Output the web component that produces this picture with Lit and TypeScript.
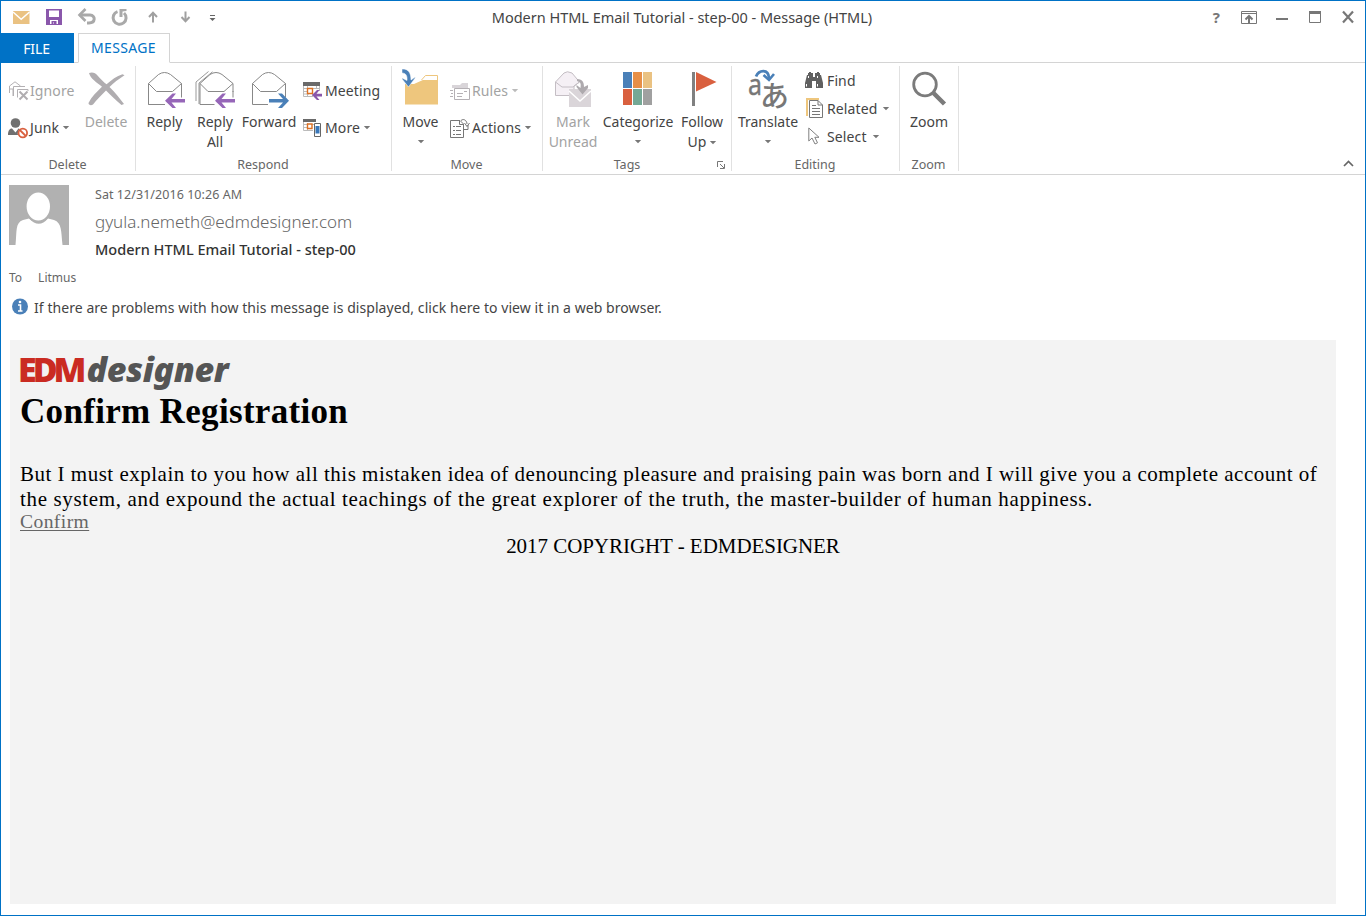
import { LitElement, html, svg, css } from "lit";
import { customElement } from "lit/decorators.js";

const ic = (w: number, h: number, body: unknown, dx = 0, dy = 0) =>
  html`<svg width=${w} height=${h} viewBox="${-dx} ${-dy} ${w} ${h}" fill="none">${body}</svg>`;

const arrowLeft = svg`<path d="M18 29.700L25.500 22.500H29L24.500 28H38V31.500H24.500L29 37H25.500Z" fill="#9666b8"/>`;

const icons = {
  mail: ic(17, 13, svg`<path d="M0 0H16.500V13H0Z" fill="#eac282"/><path d="M0 1L8.200 8.200L16.500 1" stroke="#fff" stroke-width="1.500"/>`),
  save: ic(16, 16, svg`<path d="M0 0H16V16H0Z" fill="#8a57ab"/><path d="M3 1.500H13V8H3Z" fill="#fff"/><path d="M4 11H12V15H4Z" fill="#fff"/><path d="M5.500 12H10.500V15H8V13H7.500V15H5.500Z" fill="#8a57ab"/>`),
  undo: ic(18, 16, svg`<path d="M1.500 6H12C18 6.500 17.500 14 11 14H9" stroke="#a9a9a9" stroke-width="3"/><path d="M7.500 0L1.500 6L7.500 12" stroke="#a9a9a9" stroke-width="2.600"/>`),
  redo: ic(18, 17, svg`<path d="M6.500 2.600A6.500 6.500 0 1 0 13 4" stroke="#a9a9a9" stroke-width="3"/><path d="M8.500 0H15.500V2L11.500 2.500V8H8.500Z" fill="#a9a9a9"/>`, -1),
  up: ic(10, 12, svg`<path d="M5 11.500V2M1 6L5 1.800L9 6" stroke="#a0a0a0" stroke-width="2"/>`),
  down: ic(10, 12, svg`<path d="M5 .500V10M1 6L5 10.200L9 6" stroke="#a0a0a0" stroke-width="2"/>`, 1.5),
  custom: ic(6, 6, svg`<path d="M.500 .500H5.500" stroke="#666"/><path d="M0 3H6L3 6Z" fill="#666"/>`, 2.5, 1),
  ribbon: ic(16, 13, svg`<path d="M.500 .500H15.500V12.500H.500ZM0 2.500H16" stroke="#777"/><path d="M8 12V6M4.500 8.500L8 5L11.500 8.500" stroke="#777" stroke-width="2"/>`),
  min: ic(12, 2, svg`<path d="M0 0H12V2H0Z" fill="#777"/>`, 0, 2),
  max: ic(12, 12, svg`<path d="M.500 .500H11.500V11.500H.500Z" stroke="#777"/><path d="M0 0H12V3H0Z" fill="#777"/>`),
  close: ic(12, 12, svg`<path d="M1 .500L11 11.500M11 .500L1 11.500" stroke="#777" stroke-width="2.200"/>`),
  caret: ic(6, 3, svg`<path d="M-.200 0H6.200L3 3.300Z" fill="currentColor"/>`),
  ignore: ic(20, 20, svg`<path d="M.500 12V5L6 .800L11.500 5M4 15V8H1M4.500 15V5.500H16M8.500 16.500V8.500H19V10" stroke="#b3b0b3"/><path d="M10.500 10.500L18.500 18.500M18.500 10.500L10.500 18.500" stroke="#b0adb0" stroke-width="2"/>`, 1),
  junk: ic(20, 21, svg`<circle cx="7.500" cy="5" r="4.800" fill="#707070"/><path d="M0 17C0 12 2 10.500 4 10.500L7.500 14.500L10.500 10.500C13 10.500 9 13 10 17Z" fill="#707070"/><circle cx="14.800" cy="15" r="4.300" fill="#fff" stroke="#d9603f" stroke-width="1.800"/><path d="M11.800 12L17.800 18" stroke="#d9603f" stroke-width="1.800"/>`),
  del: ic(38, 34, svg`<path d="M1.500 1C5-.500 8 1 10 3.500C13 7 16 10 19 12.200C24 8 29 4 35 2.200L37 3.200C31 7 26 11 22 15C28 21 32 26 36.500 32L34 33C29 29 24 24 18.500 18.500C14 23 9 28 5.500 32.500C3.500 34 1 33 1 31C4 25 9 20 14.500 14.800C9 10 3 7 1.500 1Z" fill="#b0adb0"/>`, 0.5, 1),
  reply: ic(38, 40, svg`<path d="M1.500 12.500L11.500 3.500Q17.500-.500 23.500 3.500L34.500 12.500V33.500H1.500Z" fill="#fff" stroke="#888"/><path d="M1.500 12.500L9.500 20.500H25.500L34.500 12.500" stroke="#888"/><path d="M16 21H38V40H16Z" fill="#fff"/><path d="M34.500 20V26.500M1.500 33.500H18" stroke="#888"/>${arrowLeft}`, 1),
  replyAll: ic(40, 40, svg`<path d="M.500 30V11L13 .500M3.500 33V12L17 .800" stroke="#999"/><path d="M4.500 12.500L14.500 3.500Q20.500-.500 26.500 3.500L37.500 12.500V33.500H4.500Z" fill="#fff" stroke="#888"/><path d="M4.500 12.500L12.500 20.500H28.500L37.500 12.500" stroke="#888"/><path d="M19 21H40V40H19Z" fill="#fff"/><path d="M37.500 20V26.500" stroke="#888"/><g transform="translate(1.500 0)">${arrowLeft}</g>`, 0.5),
  forward: ic(38, 40, svg`<path d="M1.500 12.500L11.500 3.500Q17.500-.500 23.500 3.500L34.500 12.500V33.500H1.500Z" fill="#fff" stroke="#888"/><path d="M1.500 12.500L9.500 20.500H25.500L34.500 12.500" stroke="#888"/><path d="M17 21.500H38V40H17Z" fill="#fff"/><path d="M34.500 20V26.500" stroke="#888"/><path d="M38 29.700L31 22.500H27L32 28H18V31.500H32L27 37H31Z" fill="#4a80b8"/>`, 1),
  meeting: ic(20, 18, svg`<path d="M.500 0V14.500H10M4.500 4V14M9.500 11V15M1 9.500H5M1 12H6M16.500 4V9M13.500 4V7M1 6.500H17" stroke="#bbb"/><path d="M0 0H17V4H0Z" fill="#6a6a6a"/><path d="M4.500 6.500H9.500V11.500H4.500Z" stroke="#dd7022" stroke-width="1.400" fill="#fff"/><path d="M9 13L14 8H16.500L13.500 11.800H19V14.500H13.500L16.500 18H14Z" fill="#8a57ab"/>`),
  more: ic(20, 18, svg`<path d="M.500 0V11.500H10M4.500 4V11M1 8.500H4M1 5.500H12" stroke="#bbb"/><path d="M0 0H13V3H0Z" fill="#6a6a6a"/><path d="M4.500 5H9V9.500H4.500Z" stroke="#dd7022" stroke-width="1.400" fill="#fff"/><path d="M11.500 4.500H17.500V17.500H11.500Z" fill="#fff" stroke="#666"/><path d="M12.500 7H16.500V14.500H12.500Z" fill="#3a78ba"/>`),
  move: ic(37, 37, svg`<path d="M3 15H12L22 10.500H36V35.500H3Z" fill="#eec67d"/><path d="M19.500 11L23.500 6.500H35.500V11" fill="#fff" stroke="#eec67d"/><path d="M0 0C7-.500 9 5 9 11L12.500 8.500H13.500L6.500 18L0 10V9L5 11.500C5.500 7 4 4 0 4Z" fill="#4a80b8" stroke="#fff" stroke-width=".5"/>`, 0, -2),
  rules: ic(20, 19, svg`<path d="M2 6V3H10L12 1H18V6Z" fill="#d9d5d9"/><path d="M4.500 6.500H19.500V17.500H4.500Z" fill="#fff" stroke="#b5b1b5"/><path d="M0 8.500H3M1 11.500H3M0 14.500H3M7 11.500H13M7 14.500H12M14 9.500H17" stroke="#b5b1b5"/>`),
  actions: ic(20, 19, svg`<path d="M.500 1.500H10L13.500 5V18.500H.500Z" stroke="#777"/><path d="M3 7.500H5M3 11.500H5M3 15.500H5M6 7.500H11M6 11.500H11M6 15.500H11M9.500 2V5.500H13" stroke="#777"/><path d="M11 1.500C14-1 17 2 17 5M14.500 4L17 7.500L19.500 4M14 10.500H18V6" stroke="#777"/>`),
  unread: ic(37, 38, svg`<path d="M.500 12L9 3Q12 .500 17 3L24.500 12L19 16V25.500H.500Z" fill="#f5f0f5" stroke="#c4bec4"/><path d="M.500 12L7 17H18L24.500 12" stroke="#c4bec4"/><path d="M14 19H36V37H14Z" fill="#dad5d9"/><path d="M14 21L25 31L36 21" stroke="#fff" stroke-width="1.500"/><path d="M22 9C28 9 29 13 29 17L33 15V18L27.500 24.500L21.500 17V15L25.500 18C26 14 26 12 22 11Z" fill="#aeaaae"/>`, 0, -1),
  cat: ic(30, 34, svg`<path d="M0 0H9V16H0Z" fill="#4a80b8"/><path d="M10 0H19V16H10Z" fill="#e78f47"/><path d="M20 0H29V16H20Z" fill="#eac282"/><path d="M0 17H9V33H0Z" fill="#d9603f"/><path d="M10 17H19V33H10Z" fill="#74a895"/><path d="M20 17H29V33H20Z" fill="#a0a0a0"/>`, 0, 1),
  flag: ic(25, 34, svg`<path d="M0 0H3V34H0Z" fill="#808080"/><path d="M4 0L24.500 10L4 19.500Z" fill="#d9603f"/>`, 2, 1),
  translate: ic(40, 42, svg`<text x="0" y="24" font-family="Noto Sans" font-size="29" textLength="14" lengthAdjust="spacingAndGlyphs" fill="#777" stroke="#777" stroke-width=".4">a</text><text x="12" y="35.500" font-family="Noto Sans CJK JP" font-size="29" font-weight="500" fill="#777">あ</text><path d="M8 5.500C11-1.500 20.500-2.500 21 7" stroke="#4a80b8" stroke-width="2.800"/><path d="M15.500 4L21 9L26 3" stroke="#4a80b8" stroke-width="2.600"/>`),
  find: ic(18, 16, svg`<path d="M2 3H3V1H4V0H6V1H8V5H10V1H12V0H14V1H15V3H16L18 11V16H11V9H7V16H0V11Z" fill="#606060"/><path d="M3.500 4V6M12.500 4V6M1.500 12V14.500M12.500 12V14.500" stroke="#fff"/>`, 0, -1),
  related: ic(18, 20, svg`<path d="M1 18V1H13" stroke="#eec67d" stroke-width="2"/><path d="M3.500 2.500H12L16.500 7V19.500H3.500Z" fill="#fff" stroke="#777"/><path d="M12 2.500V7H16.500M6 7.500H10M6 10.500H14M6 13.500H14M6 16.500H14" stroke="#777"/>`, 1, -1),
  select: ic(18, 18, svg`<path d="M.800 1V14L4 11L7 17L9.500 15.800L6.800 10.300H11Z" stroke="#808080"/>`, 3, -1),
  zoom: ic(35, 35, svg`<circle cx="13" cy="13" r="11.300" stroke="#7b7b7b" stroke-width="2.800"/><path d="M21.500 21.500L32.500 32.500" stroke="#7b7b7b" stroke-width="4.500"/>`, 0, 0.5),
  launcher: ic(8, 8, svg`<path d="M.500 6V.500H6" stroke="#777"/><path d="M3 3L7 7M7.500 3V7.500H3" stroke="#777"/>`),
  collapse: ic(11, 7, svg`<path d="M1 6L5.500 1.500L10 6" stroke="#666" stroke-width="1.700"/>`),
  info: ic(16, 16, svg`<circle cx="8" cy="8" r="8" fill="#4a80b8"/><path d="M6 6.500H8.500V12.500M6 12.500H10.500" stroke="#fff" stroke-width="1.600"/><circle cx="8" cy="3.500" r="1.300" fill="#fff"/>`, 0, -0.5),
  avatar: ic(60, 60, svg`<path d="M0 0H60V60H0Z" fill="#b1b1b1"/><path d="M6.500 60C8 46 6 38 14 35L20 33.500Q30 44 39 33.500L45 35C53 38 52 46 53.500 60Z" fill="#fff"/><ellipse cx="29.300" cy="21.500" rx="12.700" ry="15" fill="#fff" stroke="#b1b1b1" stroke-width="2"/>`),
};

@customElement("app-root")
export class AppRoot extends LitElement {
  static styles = css`
    :host { display: block; font-family: "Noto Sans", sans-serif; color: #444; }
    * { box-sizing: border-box; }
    svg { display: block; flex: none; overflow: visible; }
    .win { height: 916px; border: 1px solid #0072c6; background: #fff; display: flex; flex-direction: column; white-space: nowrap; }
    .bar { height: 32px; display: flex; align-items: center; justify-content: space-between; }
    .quick { display: flex; align-items: center; padding-left: 12px; width: 300px; }
    .quick svg { margin-right: 16px; }
    .quick .q-up { margin: 0 21px 0 2px; display: flex; }
    .quick .q-down { margin: 0 18px 0 0; display: flex; }
    .quick span svg { margin: 0; }
    .title { font-size: 14.500px; letter-spacing: -.02px; padding: 0 2px 1px 0; }
    .controls { display: flex; align-items: center; justify-content: flex-end; width: 300px; padding-right: 11px; gap: 21px; font-weight: 700; font-size: 15px; color: #777; }
    .snug { display: flex; margin-right: -2px; }
    .tabs { height: 30px; display: flex; border-bottom: 1px solid #d4d4d4; font-size: 14px; }
    .file { width: 73px; height: 30px; background: #0072c6; color: #fff; display: grid; place-items: center; letter-spacing: -.1px; padding-right: 2px; }
    .tab { width: 92px; height: 30px; margin-left: 4px; border: 1px solid #d4d4d4; border-bottom-color: #fff; color: #0072c6; background: #fff; display: grid; place-items: center; letter-spacing: .35px; padding: 0 1px 2px 0; font-size: 14px; }
    .ribbon { height: 112px; display: flex; border-bottom: 1px solid #d4d4d4; padding-top: 3px; font-size: 14px; line-height: 20px; }
    .group { height: 105px; border-right: 1px solid #e1e1e1; display: flex; flex-direction: column; }
    .tools { height: 91px; display: flex; flex: none; }
    .label { text-align: center; font-size: 12.500px; line-height: 16px; color: #666; display: flex; justify-content: center; position: relative; flex: none; padding-right: 1px; }
    .with-launch { padding-right: 20px; }
    .launch { position: absolute; right: 6px; top: 4px; }
    .big { display: flex; flex-direction: column; align-items: center; text-align: center; }
    .pic { height: 46px; display: flex; padding-top: 5px; }
    .big .drop { height: 18px; display: flex; align-items: center; }
    .col { display: flex; flex-direction: column; padding-top: 7px; gap: 1px; letter-spacing: .12px; }
    .in2 { padding-left: 2px; }
    .in1 { padding-left: 1px; }
    .row { height: 36px; display: flex; align-items: center; gap: 2px; }
    .tight { padding-top: 1px; gap: 0; padding-left: 1px; }
    .tight .row { height: 28px; gap: 4px; }
    .row .drop { margin: -2px 0 0 2px; }
    .drop { color: #777; }
    .off { color: #a3a3a3; }
    .off .drop { color: #bbb; }
    .inline { display: flex; align-items: center; gap: 4px; justify-content: center; }
    .spacer { flex: 1; }
    .collapse { align-self: flex-end; padding: 0 11px 7px 0; }
    .head { display: flex; padding: 10px 0 0 8px; gap: 26px; height: 91px; }
    .meta { display: flex; flex-direction: column; }
    .date { font-size: 12.500px; line-height: 20px; color: #666; letter-spacing: .05px; }
    .from { font-size: 17px; line-height: 34px; color: #666; font-weight: 300; letter-spacing: -.03px; }
    .subj { font-size: 14.500px; line-height: 20px; color: #333; font-weight: 500; letter-spacing: .01px; }
    .to { display: flex; gap: 16px; padding-left: 8px; font-size: 12px; line-height: 24px; color: #666; }
    .note { display: flex; align-items: center; gap: 6px; padding-left: 11px; height: 34px; font-size: 14px; letter-spacing: .06px; }
    .mail { margin: 16px 29px 11px 9px; flex: 1; background: #f3f3f3; padding: 10px; color: #000; font-family: "Liberation Serif", serif; font-size: 21px; line-height: 25px; }
    .logo { height: 40px; display: flex; align-items: baseline; font-family: "Noto Sans", sans-serif; font-weight: 900; line-height: 38px; }
    .edm { font-size: 34px; color: #ca2b22; letter-spacing: -4px; margin-left: -2px; }
    .designer { font-size: 34px; color: #555; font-style: italic; letter-spacing: -.350px; margin-left: 4px; }
    h1 { font-family: "Liberation Serif", serif; font-size: 35px; line-height: 42px; margin: 1px 0 29px; letter-spacing: .32px; }
    .l1 { letter-spacing: .5px; }
    .l2 { letter-spacing: .655px; }
    .cta { font-size: 19.600px; line-height: 20px; margin-bottom: 2px; letter-spacing: .4px; color: #666; text-decoration: underline; text-underline-offset: 2px; text-decoration-thickness: 1px; }
    .copy { text-align: center; letter-spacing: -.05px; }
  `;

  private big(icon: unknown, label: unknown, width: number, opts: { off?: boolean; drop?: boolean } = {}) {
    return html`<div class="big ${opts.off ? "off" : ""}" style="width:${width}px">
      <div class="pic">${icon}</div><div>${label}</div>
      ${opts.drop ? html`<div class="drop">${icons.caret}</div>` : ""}
    </div>`;
  }

  private row(icon: unknown, label: string, drop = false, off = false) {
    return html`<div class="row ${off ? "off" : ""}">${icon}<span>${label}</span>${drop ? html`<span class="drop">${icons.caret}</span>` : ""}</div>`;
  }

  private group(label: string, width: number, body: unknown, launcher = false) {
    return html`<section class="group" style="width:${width}px">
      <div class="tools">${body}</div>
      <div class="label ${launcher ? "with-launch" : ""}">${label}${launcher ? html`<span class="launch">${icons.launcher}</span>` : ""}</div>
    </section>`;
  }

  render() {
    return html`<div class="win">
      <div class="bar">
        <div class="quick">${icons.mail}${icons.save}${icons.undo}${icons.redo}<span class="q-up">${icons.up}</span><span class="q-down">${icons.down}</span>${icons.custom}</div>
        <div class="title">Modern HTML Email Tutorial - step-00 - Message (HTML)</div>
        <div class="controls"><span class="help">?</span><span class="snug">${icons.ribbon}</span>${icons.min}${icons.max}${icons.close}</div>
      </div>
      <nav class="tabs"><div class="file">FILE</div><div class="tab">MESSAGE</div></nav>
      <div class="ribbon">
        ${this.group("Delete", 135, html`<div class="col" style="width:79px;padding-left:7px">${this.row(icons.ignore, "Ignore", false, true)}${this.row(icons.junk, "Junk", true)}</div>${this.big(icons.del, "Delete", 52, { off: true })}`)}
        ${this.group("Respond", 256, html`${this.big(icons.reply, "Reply", 57)}${this.big(icons.replyAll, html`Reply<br />All`, 44)}${this.big(icons.forward, "Forward", 64)}<div class="col in2">${this.row(icons.meeting, "Meeting")}${this.row(icons.more, "More", true)}</div>`)}
        ${this.group("Move", 151, html`${this.big(icons.move, "Move", 57, { drop: true })}<div class="col in1">${this.row(icons.rules, "Rules", true, true)}${this.row(icons.actions, "Actions", true)}</div>`)}
        ${this.group("Tags", 189, html`${this.big(icons.unread, html`Mark<br />Unread`, 60, { off: true })}${this.big(icons.cat, "Categorize", 70, { drop: true })}${this.big(icons.flag, html`Follow<span class="inline">Up <span class="drop">${icons.caret}</span></span>`, 58)}`, true)}
        ${this.group("Editing", 168, html`${this.big(icons.translate, "Translate", 72, { drop: true })}<div class="col tight">${this.row(icons.find, "Find")}${this.row(icons.related, "Related", true)}${this.row(icons.select, "Select", true)}</div>`)}
        ${this.group("Zoom", 59, this.big(icons.zoom, "Zoom", 58))}
        <div class="spacer"></div><div class="collapse">${icons.collapse}</div>
      </div>
      <div class="head">${icons.avatar}<div class="meta"><div class="date">Sat 12/31/2016 10:26 AM</div><div class="from">gyula.nemeth@edmdesigner.com</div><div class="subj">Modern HTML Email Tutorial - step-00</div></div></div>
      <div class="to"><span>To</span><span>Litmus</span></div>
      <div class="note">${icons.info}<span>If there are problems with how this message is displayed, click here to view it in a web browser.</span></div>
      <article class="mail">
        <div class="logo"><span class="edm">EDM</span><span class="designer">designer</span></div>
        <h1>Confirm Registration</h1>
        <div class="l1">But I must explain to you how all this mistaken idea of denouncing pleasure and praising pain was born and I will give you a complete account of</div>
        <div class="l2">the system, and expound the actual teachings of the great explorer of the truth, the master-builder of human happiness.</div>
        <div class="cta">Confirm</div>
        <div class="copy">2017 COPYRIGHT - EDMDESIGNER</div>
      </article>
    </div>`;
  }
}
